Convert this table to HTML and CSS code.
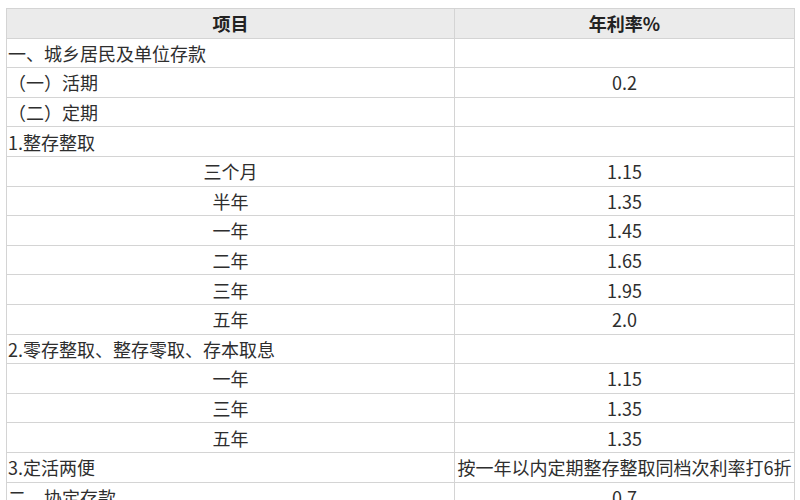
FILE: index.html
```html
<!DOCTYPE html>
<html lang="zh-CN">
<head>
<meta charset="utf-8">
<link rel="stylesheet" href="styles.css">
</head>
<body>
<div class="wrap">
<table class="rates">
  <colgroup><col class="c1"><col class="c2"></colgroup>
  <thead>
    <tr><th>项目</th><th>年利率%</th></tr>
  </thead>
  <tbody>
    <tr><td>一、城乡居民及单位存款</td><td></td></tr>
    <tr><td>（一）活期</td><td class="num">0.2</td></tr>
    <tr><td>（二）定期</td><td></td></tr>
    <tr><td>1.整存整取</td><td></td></tr>
    <tr><td class="sub">三个月</td><td class="num">1.15</td></tr>
    <tr><td class="sub">半年</td><td class="num">1.35</td></tr>
    <tr><td class="sub">一年</td><td class="num">1.45</td></tr>
    <tr><td class="sub">二年</td><td class="num">1.65</td></tr>
    <tr><td class="sub">三年</td><td class="num">1.95</td></tr>
    <tr><td class="sub">五年</td><td class="num">2.0</td></tr>
    <tr><td>2.零存整取、整存零取、存本取息</td><td></td></tr>
    <tr><td class="sub">一年</td><td class="num">1.15</td></tr>
    <tr><td class="sub">三年</td><td class="num">1.35</td></tr>
    <tr><td class="sub">五年</td><td class="num">1.35</td></tr>
    <tr><td>3.定活两便</td><td class="num">按一年以内定期整存整取同档次利率打6折</td></tr>
    <tr><td>二、协定存款</td><td class="num">0.7</td></tr>
  </tbody>
</table>
</div>
</body>
</html>
```

FILE: styles.css
```css
html, body {
  margin: 0;
  padding: 0;
  background: #ffffff;
}

.wrap {
  padding: 8px 0 0 6px;
}

.rates {
  border-collapse: collapse;
  table-layout: fixed;
  width: 788px;
  font-family: "Noto Sans CJK SC", "Microsoft YaHei", sans-serif;
  font-size: 18px;
  color: #2e2e2e;
}

.c1 { width: 448px; }
.c2 { width: 340px; }

.rates th,
.rates td {
  border: 1px solid #d4d4d4;
  height: 28.6px;
  padding: 0 1px;
  line-height: 22px;
  white-space: nowrap;
  overflow: hidden;
  vertical-align: middle;
}

.rates th {
  background: #ebebeb;
  font-weight: bold;
  text-align: center;
  color: #222;
}

.rates td {
  text-align: left;
}

.rates td.sub,
.rates td.num {
  text-align: center;
}
```
